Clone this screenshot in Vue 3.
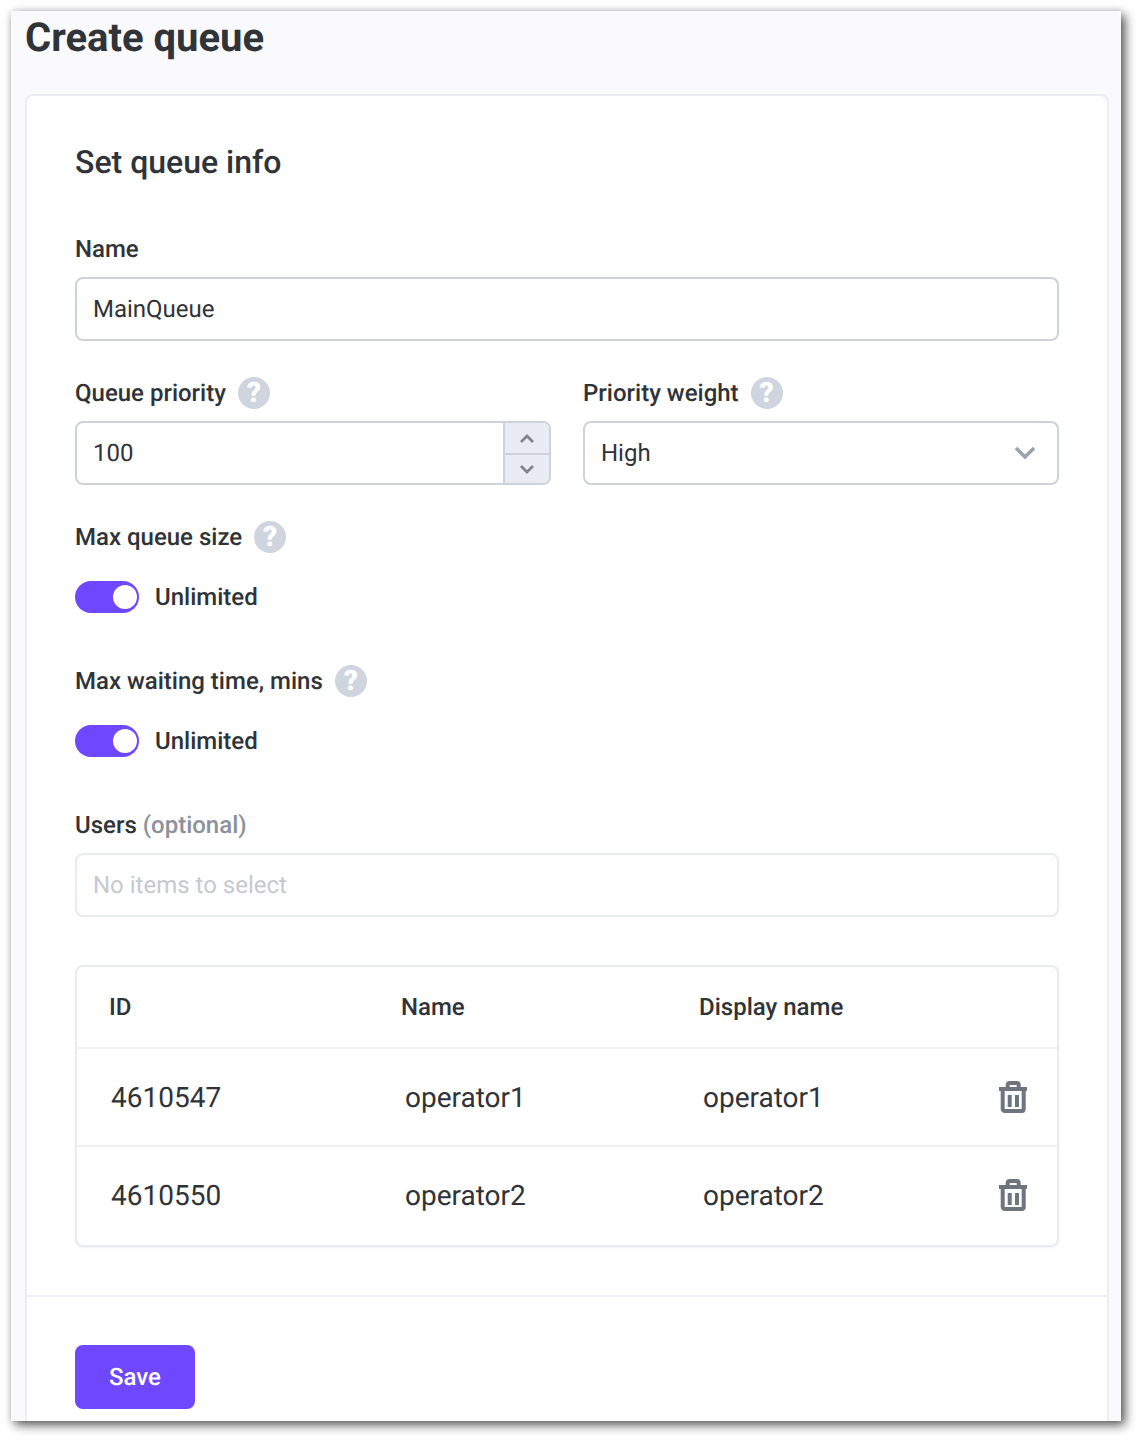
<script setup>
const users = [
  { id: '4610547', name: 'operator1', display: 'operator1' },
  { id: '4610550', name: 'operator2', display: 'operator2' },
]
</script>

<template>
  <div class="page">
    <main class="window">
      <h1 class="title">Create queue</h1>
      <section class="card">
        <div class="form">
          <h2 class="heading">Set queue info</h2>

          <div class="label-row"><span class="label">Name</span></div>
          <div class="input">MainQueue</div>

          <div class="columns">
            <div>
              <div class="label-row">
                <span class="label">Queue priority</span>
                <span class="help">?</span>
              </div>
              <div class="input number">
                <span class="value">100</span>
                <div class="stepper">
                  <button class="step" type="button">
                    <svg width="16" height="10" viewBox="0 0 16 10"><path d="M2 8l6-6 6 6" /></svg>
                  </button>
                  <button class="step" type="button">
                    <svg width="16" height="10" viewBox="0 0 16 10"><path d="M2 2l6 6 6-6" /></svg>
                  </button>
                </div>
              </div>
            </div>
            <div>
              <div class="label-row">
                <span class="label">Priority weight</span>
                <span class="help">?</span>
              </div>
              <div class="input select">
                <span>High</span>
                <svg class="caret" width="22" height="14" viewBox="0 0 22 14"><path d="M2 2l9 9 9-9" /></svg>
              </div>
            </div>
          </div>

          <div class="label-row spaced">
            <span class="label">Max queue size</span>
            <span class="help">?</span>
          </div>
          <div class="toggle-row">
            <span class="toggle"><span class="knob"></span></span>
            <span class="label">Unlimited</span>
          </div>

          <div class="label-row spaced-lg">
            <span class="label">Max waiting time, mins</span>
            <span class="help">?</span>
          </div>
          <div class="toggle-row">
            <span class="toggle"><span class="knob"></span></span>
            <span class="label">Unlimited</span>
          </div>

          <div class="label-row spaced-lg">
            <span class="label">Users <span class="optional">(optional)</span></span>
          </div>
          <div class="input disabled">No items to select</div>

          <div class="table">
            <div class="row head">
              <span class="id">ID</span>
              <span class="name">Name</span>
              <span class="display">Display name</span>
            </div>
            <div v-for="user in users" :key="user.id" class="row body">
              <span class="id">{{ user.id }}</span>
              <span class="name">{{ user.name }}</span>
              <span class="display">{{ user.display }}</span>
              <svg class="trash" width="28" height="32" viewBox="0 0 28 32">
                <path d="M0 8h28M3.700 8v20a2 2 0 0 0 2 2h17a2 2 0 0 0 2-2V8M8.700 7V4a2 2 0 0 1 2-2h7a2 2 0 0 1 2 2v3M10.700 14v12M18 14v12" />
              </svg>
            </div>
          </div>
        </div>
        <footer class="footer">
          <button class="save" type="button">Save</button>
        </footer>
      </section>
    </main>
  </div>
</template>

<style>
html, body { margin: 0; background: #fff; }
</style>

<style scoped>
* { box-sizing: border-box; }
.page {
  height: 1440px;
  padding: 11px 19px 0 11px;
  font-family: Roboto, "Liberation Sans", sans-serif;
  color: #303337;
  text-rendering: geometricPrecision;
}
.window {
  height: 1410px;
  overflow: hidden;
  padding: 0 12px 0 14px;
  background: #fafafd;
  box-shadow: 4px 4px 10px rgba(0, 0, 0, 0.65), 0 0 6px rgba(0, 0, 0, 0.12);
}
.title {
  margin: 0;
  height: 83px;
  font-size: 40px;
  line-height: 54px;
  font-weight: 700;
}
.card {
  height: 1400px;
  background: #fff;
  border: 2px solid #ebedf5;
  border-radius: 8px;
}
.form {
  padding: 0 48px 48px;
  border-bottom: 2px solid #eef0f7;
}
.heading {
  margin: 0;
  height: 137px;
  padding-top: 44px;
  font-size: 32px;
  line-height: 44px;
  font-weight: 500;
}
.label-row {
  display: flex;
  align-items: center;
  gap: 12px;
  height: 32px;
  margin-bottom: 12px;
}
.label {
  font-size: 24px;
  line-height: 32px;
  font-weight: 500;
}
.optional { color: #8b929c; }
.help {
  width: 32px;
  height: 32px;
  border-radius: 50%;
  background: #cfd5de;
  color: #fff;
  font-size: 28px;
  font-weight: 900;
  line-height: 32px;
  text-align: center;
}
.input {
  height: 64px;
  padding: 0 16px;
  display: flex;
  align-items: center;
  border: 2px solid #cdd3dc;
  border-radius: 8px;
  font-size: 24px;
  background: #fff;
}
.columns {
  display: grid;
  grid-template-columns: 1fr 1fr;
  gap: 32px;
  margin-top: 36px;
}
.number { padding-right: 0; justify-content: space-between; overflow: hidden; }
.stepper {
  width: 46px;
  height: 60px;
  display: flex;
  flex-direction: column;
  background: #e9ecf4;
  border-left: 2px solid #cdd3dc;
}
.step {
  flex: 1;
  padding: 2px 0 0;
  border: 0;
  background: transparent;
  display: flex;
  align-items: center;
  justify-content: center;
}
.step + .step { padding: 0; border-top: 2px solid #cdd3dc; }
.step path {
  fill: none;
  stroke: #7d8590;
  stroke-width: 2.800;
}
.select { justify-content: space-between; padding-right: 21px; }
.caret path {
  fill: none;
  stroke: #9aa2af;
  stroke-width: 3.600;
}
.spaced { margin-top: 36px; margin-bottom: 28px; }
.spaced-lg { margin-top: 52px; }
.spaced-lg:has(.help) { margin-bottom: 28px; }
.toggle-row {
  display: flex;
  align-items: center;
  gap: 16px;
  height: 32px;
}
.toggle {
  width: 64px;
  height: 32px;
  padding: 4px 2px 4px 4px;
  display: flex;
  justify-content: flex-end;
  border-radius: 16px;
  background: #6f47ff;
}
.knob {
  width: 24px;
  height: 24px;
  border-radius: 50%;
  background: #fff;
}
.disabled {
  border-color: #e8ebf1;
  color: #c5c9d0;
}
.table {
  margin-top: 48px;
  border: 2px solid #e8ebf1;
  border-radius: 8px;
  box-shadow: 0 1px 2px rgba(50, 60, 90, 0.08);
}
.row {
  display: grid;
  align-items: center;
  position: relative;
}
.row + .row { border-top: 2px solid #eef0f6; }
.head {
  grid-template-columns: 292px 298px 1fr;
  height: 80px;
  padding-left: 32px;
  font-size: 24px;
  font-weight: 500;
}
.body {
  grid-template-columns: 294px 298px 1fr;
  height: 98px;
  padding-left: 34px;
  font-size: 28px;
}
.body:last-child { height: 100px; padding-bottom: 2px; }
.trash {
  position: absolute;
  right: 30px;
  top: 32px;
}
.trash path {
  fill: none;
  stroke: #6e757e;
  stroke-width: 4;
}
.footer { padding: 48px 48px 0; }
.save {
  display: block;
  width: 120px;
  height: 64px;
  border: 0;
  border-radius: 8px;
  background: #6f47ff;
  color: #fff;
  font-family: inherit;
  font-size: 24px;
  font-weight: 500;
  text-rendering: inherit;
}
</style>
